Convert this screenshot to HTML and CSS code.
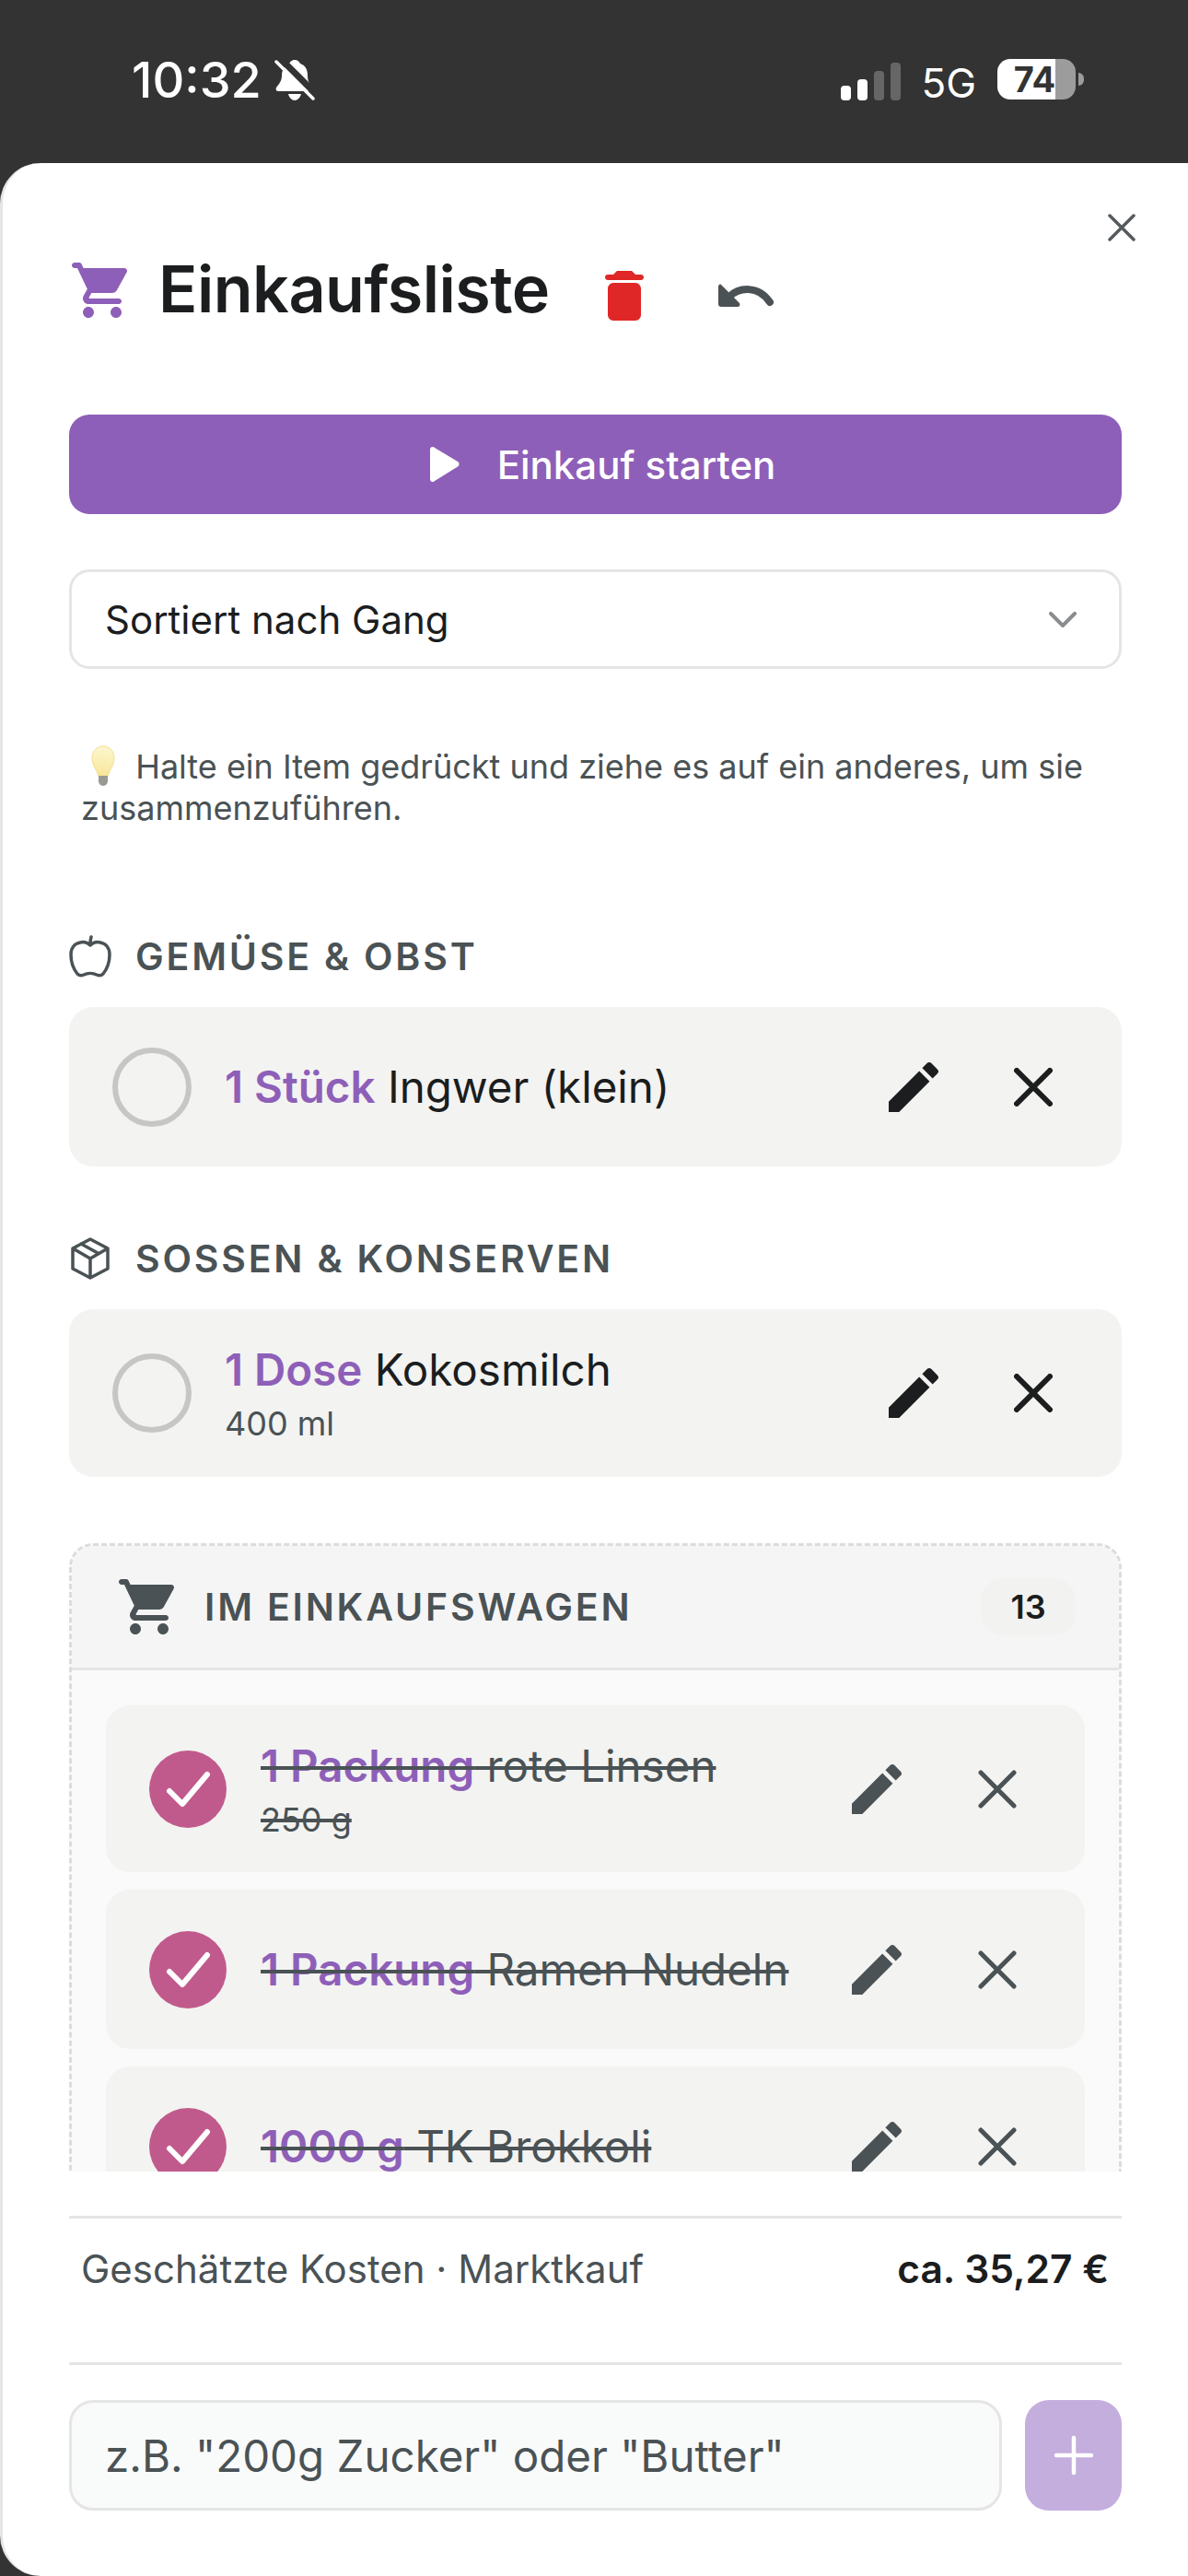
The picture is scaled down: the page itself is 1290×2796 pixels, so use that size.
FILE: index.html
```html
<!DOCTYPE html>
<html>
    <head>
        <meta charset="utf-8">
        <title>Einkaufsliste</title>
        <link rel="stylesheet" href="styles.css">
    </head>

    <body>
        <header class="statusbar">
            <div class="status-left">
                <span class="clock">10:32</span>
                <svg class="bell" viewBox="0 0 44 46">
                    <path fill="#fff" d="M22 1c3 0 5 2 6 4 6 2 8 7 8 13 0 6 2 9 5 13 1 2 0 4-2 4H4c-2 0-3-2-2-4 3-4 6-7 6-13 0-6 3-11 8-13 1-2 3-4 6-4zM15 38h14c-1 4-4 7-7 7s-6-3-7-7z"/>
                    <path stroke="#333" stroke-width="7" d="M6 -1 46 39"/>
                    <path stroke="#fff" stroke-width="3.5" stroke-linecap="round" d="M2 3 42 43"/>
                </svg>
            </div>
            <div class="status-right">
                <div class="signal">
                    <i class="bar bar1"></i>
                    <i class="bar bar2"></i>
                    <i class="bar bar3"></i>
                    <i class="bar bar4"></i>
                </div>
                <span class="net">5G</span>
                <div class="battery"><span class="battery-level">74</span></div>
                <i class="battery-tip"></i>
            </div>
        </header>

        <main class="sheet">
            <svg class="close" viewBox="0 0 30 30">
                <path d="M2 2 28 28M28 2 2 28"/>
            </svg>

            <div class="title-row">
                <svg class="title-cart" viewBox="0 0 24 24">
                    <path d="M7 18c-1.1 0-1.99.9-1.99 2S5.9 22 7 22s2-.9 2-2-.9-2-2-2zM2 2c-.55 0-1 .45-1 1s.45 1 1 1h1l3.6 7.59-1.35 2.45c-.16.28-.25.61-.25.96 0 1.1.9 2 2 2h11c.55 0 1-.45 1-1s-.45-1-1-1H7.42c-.14 0-.25-.11-.25-.25l.03-.12.9-1.63h7.45c.75 0 1.41-.41 1.75-1.03l3.58-6.49c.08-.14.12-.31.12-.48 0-.55-.45-1-1-1H5.21l-.67-1.43C4.38 2.22 4.03 2 3.64 2H2zm15 16c-1.1 0-1.99.9-1.99 2s.89 2 1.99 2 2-.9 2-2-.9-2-2-2z"/>
                </svg>
                <h1>Einkaufsliste</h1>
                <svg class="trash" viewBox="0 0 42 54">
                    <path d="M13 0h16l4 4h6c1.500 0 3 1 3 3s-1.500 3-3 3H3c-1.500 0-3-1-3-3s1.500-3 3-3h6zM9 13h24c3 0 6 3 6 6v29c0 3-3 6-6 6H9c-3 0-6-3-6-6V19c0-3 3-6 6-6z"/>
                </svg>
                <svg class="undo" viewBox="0 0 60 26">
                    <path class="undo-head" d="M3 1 23 21c1 2 0 4-2 4H3c-2 0-3-1-3-3V3c0-2 2-3 3-2z"/>
                    <path class="undo-line" d="M12 14C22 4 43 1 56 20"/>
                </svg>
            </div>

            <button class="start-btn" type="button">
                <svg class="play" viewBox="0 0 32 38"><path d="M0 3C0 0 3-1 5 1l25 15c2 1.500 2 4 0 5.500L5 37c-2 2-5 1-5-2z"/></svg>
                Einkauf starten
            </button>

            <div class="sort-select">
                <span>Sortiert nach Gang</span>
                <svg class="chevron" viewBox="0 0 30 18"><path d="M2 2 15 15 28 2"/></svg>
            </div>

            <p class="tip">
                <svg class="bulb" viewBox="0 0 30 44">
                    <defs>
                        <linearGradient id="bulbFill" x1="0" y1="0" x2="0" y2="1">
                            <stop offset="0" stop-color="#fdf7d0"/>
                            <stop offset="1" stop-color="#f8e69a"/>
                        </linearGradient>
                    </defs>
                    <path fill="url(#bulbFill)" stroke="#f3e08c" stroke-width="1" d="M15 1c7 0 12 5 12 13 0 7-4 11-7 19h-10C7 25 3 21 3 14 3 6 8 1 15 1z"/>
                    <path fill="#9a9a94" d="M10 33h10v6c0 2-2 5-5 5s-5-3-5-5z"/>
                </svg>
                Halte ein Item gedrückt und ziehe es auf ein anderes, um sie zusammenzuführen.
            </p>

            <h2 class="section-head head-first">
                <svg class="section-icon" viewBox="0 0 46 46">
                    <path d="M23 11c-3-3-7-4-11-3C6 9 2 14 2 21c0 8 3 16 7 21 2 2 5 2 7 1 4-2 10-2 14 0 2 1 5 1 7-1 4-5 7-13 7-21 0-7-4-12-10-13-4-1-8 0-11 3zM23 11c0-3 0-6 1-9"/>
                </svg>
                GEMÜSE &amp; OBST
            </h2>
            <div class="item item-single">
                <i class="check-open"></i>
                <div class="item-text"><b>1 Stück</b> Ingwer (klein)</div>
                <svg class="edit" viewBox="0 0 24 24"><path d="M3 17.250V21h3.750L17.810 9.940l-3.750-3.750L3 17.250zM20.710 7.040c.39-.39.39-1.020 0-1.410l-2.340-2.340c-.39-.39-1.020-.39-1.410 0l-1.830 1.830 3.750 3.750 1.830-1.830z"/></svg>
                <svg class="remove" viewBox="0 0 42 42"><path d="M3 3 39 39M39 3 3 39"/></svg>
            </div>

            <h2 class="section-head head-second">
                <svg class="section-icon" viewBox="0 0 46 46">
                    <path d="M23 2 42 12V34L23 44 4 34V12zM4 12 23 23 42 12M23 23V44M13 7 32 17.500"/>
                </svg>
                SOSSEN &amp; KONSERVEN
            </h2>
            <div class="item item-double">
                <i class="check-open"></i>
                <div class="item-text">
                    <div><b>1 Dose</b> Kokosmilch</div>
                    <div class="item-sub">400 ml</div>
                </div>
                <svg class="edit" viewBox="0 0 24 24"><path d="M3 17.250V21h3.750L17.810 9.940l-3.750-3.750L3 17.250zM20.710 7.040c.39-.39.39-1.020 0-1.410l-2.340-2.340c-.39-.39-1.020-.39-1.410 0l-1.830 1.830 3.750 3.750 1.830-1.830z"/></svg>
                <svg class="remove" viewBox="0 0 42 42"><path d="M3 3 39 39M39 3 3 39"/></svg>
            </div>

            <section class="cart-box">
                <div class="cart-head">
                    <svg class="cart-icon" viewBox="0 0 24 24">
                        <path d="M7 18c-1.1 0-1.99.9-1.99 2S5.9 22 7 22s2-.9 2-2-.9-2-2-2zM2 2c-.55 0-1 .45-1 1s.45 1 1 1h1l3.6 7.59-1.35 2.45c-.16.28-.25.61-.25.96 0 1.1.9 2 2 2h11c.55 0 1-.45 1-1s-.45-1-1-1H7.42c-.14 0-.25-.11-.25-.25l.03-.12.9-1.63h7.45c.75 0 1.41-.41 1.75-1.03l3.58-6.49c.08-.14.12-.31.12-.48 0-.55-.45-1-1-1H5.21l-.67-1.43C4.38 2.22 4.03 2 3.64 2H2zm15 16c-1.1 0-1.99.9-1.99 2s.89 2 1.99 2 2-.9 2-2-.9-2-2-2z"/>
                    </svg>
                    <span class="cart-title">IM EINKAUFSWAGEN</span>
                    <span class="cart-count">13</span>
                </div>
                <div class="cart-list">
                    <div class="item done item-cart-double">
                        <svg class="check-done" viewBox="0 0 84 84"><circle cx="42" cy="42" r="42"/><path d="M22 44 36 58 63 26"/></svg>
                        <div class="item-text">
                            <div class="strike"><b>1 Packung</b> rote Linsen</div>
                            <div class="item-sub strike">250 g</div>
                        </div>
                        <svg class="edit" viewBox="0 0 24 24"><path d="M3 17.250V21h3.750L17.810 9.940l-3.750-3.750L3 17.250zM20.710 7.040c.39-.39.39-1.020 0-1.410l-2.340-2.340c-.39-.39-1.020-.39-1.410 0l-1.830 1.830 3.750 3.750 1.830-1.830z"/></svg>
                        <svg class="remove" viewBox="0 0 42 42"><path d="M3 3 39 39M39 3 3 39"/></svg>
                    </div>
                    <div class="item done item-cart-single">
                        <svg class="check-done" viewBox="0 0 84 84"><circle cx="42" cy="42" r="42"/><path d="M22 44 36 58 63 26"/></svg>
                        <div class="item-text">
                            <div class="strike"><b>1 Packung</b> Ramen Nudeln</div>
                        </div>
                        <svg class="edit" viewBox="0 0 24 24"><path d="M3 17.250V21h3.750L17.810 9.940l-3.750-3.750L3 17.250zM20.710 7.040c.39-.39.39-1.020 0-1.410l-2.340-2.340c-.39-.39-1.020-.39-1.410 0l-1.830 1.830 3.750 3.750 1.830-1.830z"/></svg>
                        <svg class="remove" viewBox="0 0 42 42"><path d="M3 3 39 39M39 3 3 39"/></svg>
                    </div>
                    <div class="item done item-cart-single">
                        <svg class="check-done" viewBox="0 0 84 84"><circle cx="42" cy="42" r="42"/><path d="M22 44 36 58 63 26"/></svg>
                        <div class="item-text">
                            <div class="strike"><b>1000 g</b> TK Brokkoli</div>
                        </div>
                        <svg class="edit" viewBox="0 0 24 24"><path d="M3 17.250V21h3.750L17.810 9.940l-3.750-3.750L3 17.250zM20.710 7.040c.39-.39.39-1.020 0-1.410l-2.340-2.340c-.39-.39-1.020-.39-1.410 0l-1.830 1.830 3.750 3.750 1.830-1.830z"/></svg>
                        <svg class="remove" viewBox="0 0 42 42"><path d="M3 3 39 39M39 3 3 39"/></svg>
                    </div>
                </div>
            </section>

            <div class="costs">
                <span>Geschätzte Kosten · Marktkauf</span>
                <strong>ca. 35,27 €</strong>
            </div>

            <div class="add-row">
                <div class="add-input">z.B. "200g Zucker" oder "Butter"</div>
                <div class="add-btn">
                    <svg class="plus" viewBox="0 0 44 44"><path d="M22 3V41M3 22H41"/></svg>
                </div>
            </div>
        </main>
    </body>
</html>
```

FILE: styles.css
```css
* {
    box-sizing: border-box;
}

body {
    margin: 0;
    width: 1290px;
    height: 2796px;
    overflow: hidden;
    display: flex;
    flex-direction: column;
    background-color: #333333;
    font-family: Inter, "Noto Sans", sans-serif;
    color: #1b1d1e;
}

/* status bar */
.statusbar {
    height: 177px;
    flex-shrink: 0;
    display: flex;
    justify-content: space-between;
    padding: 64px 113px 0 143px;
    color: #fff;
}

.status-left {
    display: flex;
    align-items: flex-start;
    height: 46px;
}

.clock {
    font-size: 54px;
    font-weight: 500;
    line-height: 46px;
}

.bell {
    width: 44px;
    height: 46px;
    margin-left: 14px;
}

.status-right {
    display: flex;
    align-items: flex-start;
}

.signal {
    display: flex;
    align-items: flex-end;
    gap: 7px;
    height: 43px;
    margin-top: 2px;
}

.bar {
    width: 11px;
    border-radius: 4px;
    background-color: #fff;
}

.bar1 {
    height: 16px;
}

.bar2 {
    height: 23px;
}

.bar3 {
    height: 32px;
    background-color: #666;
}

.bar4 {
    height: 41px;
    background-color: #666;
}

.net {
    font-size: 44px;
    font-weight: 400;
    line-height: 44px;
    margin: 4px 0 0 22px;
}

.battery {
    width: 85px;
    height: 44px;
    margin-left: 23px;
    border-radius: 14px;
    overflow: hidden;
    background: linear-gradient(to right, #fff 74%, #9c9c9c 74%);
    color: #333;
    text-align: center;
}

.battery-level {
    display: block;
    font-size: 38px;
    font-weight: 700;
    line-height: 44px;
    margin-right: 4px;
}

.battery-tip {
    width: 6px;
    height: 14px;
    margin: 15px 0 0 3px;
    border-radius: 0 7px 7px 0;
    background-color: #9c9c9c;
}

/* sheet */
.sheet {
    position: relative;
    flex: 1;
    display: flex;
    flex-direction: column;
    padding: 0 72px;
    background-color: #fff;
    border-left: 3px solid #e6e6e3;
    border-radius: 44px 0 0 44px;
}

.close {
    position: absolute;
    top: 55px;
    right: 57px;
    width: 30px;
    height: 30px;
    fill: none;
    stroke: #555a5c;
    stroke-width: 3.500;
    stroke-linecap: round;
}

.title-row {
    display: flex;
    align-items: center;
    height: 72px;
    margin-top: 102px;
}

.title-cart {
    width: 72px;
    height: 72px;
    fill: #8e5fb8;
}

h1 {
    margin: -2px 0 0 25px;
    font-size: 70px;
    font-weight: 600;
    line-height: 72px;
    letter-spacing: -0.5px;
    color: #1b1d1e;
}

.trash {
    width: 42px;
    height: 54px;
    margin: 12px 0 0 60px;
    fill: #e02727;
}

.undo {
    width: 60px;
    height: 26px;
    margin: 12px 0 0 81px;
}

.undo-head {
    fill: #4a5255;
}

.undo-line {
    fill: none;
    stroke: #4a5255;
    stroke-width: 8;
    stroke-linecap: round;
}

.start-btn {
    display: flex;
    align-items: center;
    justify-content: center;
    gap: 41px;
    height: 108px;
    margin-top: 99px;
    padding-left: 22px;
    border: none;
    border-radius: 22px;
    background-color: #8e5fb8;
    color: #fff;
    font-family: inherit;
    font-size: 42px;
    font-weight: 500;
}

.play {
    width: 32px;
    height: 38px;
    fill: #fff;
}

.sort-select {
    display: flex;
    align-items: center;
    justify-content: space-between;
    height: 108px;
    margin-top: 60px;
    padding: 0 46px 0 36px;
    border: 3px solid #e5e5e4;
    border-radius: 22px;
    font-size: 42px;
}

.chevron {
    width: 30px;
    height: 18px;
    margin-top: 2px;
    fill: none;
    stroke: #8a8c8d;
    stroke-width: 4;
    stroke-linecap: round;
    stroke-linejoin: round;
}

.tip {
    margin: 83px 0 0;
    padding: 0 30px 0 13px;
    font-size: 36px;
    line-height: 45px;
    color: #4a5255;
}

.bulb {
    width: 30px;
    height: 44px;
    margin: 0 10px 0 9px;
    vertical-align: -8px;
}

.section-head {
    display: flex;
    align-items: center;
    gap: 26px;
    height: 46px;
    margin: 0;
    font-size: 41px;
    font-weight: 600;
    letter-spacing: 2.800px;
    color: #4a5255;
}

.head-first {
    margin-top: 115px;
}

.head-second {
    margin-top: 77px;
}

.section-icon {
    width: 46px;
    height: 46px;
    fill: none;
    stroke: #4a5255;
    stroke-width: 3.500;
    stroke-linejoin: round;
    stroke-linecap: round;
}

/* list rows */
.item {
    display: flex;
    align-items: center;
    flex-shrink: 0;
    border-radius: 26px;
    background-color: #f3f3f1;
}

.item-single {
    height: 173px;
    margin-top: 32px;
    padding: 0 75px 0 47px;
}

.item-double {
    height: 182px;
    margin-top: 32px;
    padding: 0 75px 0 47px;
}

.check-open {
    width: 86px;
    height: 86px;
    flex-shrink: 0;
    border: 6px solid #c6c7c5;
    border-radius: 50%;
}

.item-text {
    flex: 1;
    margin-left: 36px;
    font-size: 47.500px;
    line-height: 62px;
    color: #1b1d1e;
}

.item-text b {
    font-weight: 600;
    color: #8e5fb8;
}

.item-sub {
    margin-top: 4px;
    font-size: 36px;
    line-height: 46px;
    color: #4a5255;
}

.edit {
    width: 72px;
    height: 72px;
    flex-shrink: 0;
    fill: #1b1d1e;
}

.remove {
    width: 42px;
    height: 42px;
    flex-shrink: 0;
    margin-left: 73px;
    fill: none;
    stroke: #1b1d1e;
    stroke-width: 6;
    stroke-linecap: round;
}

/* cart */
.cart-box {
    height: 682px;
    flex-shrink: 0;
    margin-top: 72px;
    overflow: hidden;
    border: 3px dashed #dcdcda;
    border-bottom: none;
    border-radius: 26px 26px 0 0;
    background-color: #fafafa;
}

.cart-head {
    display: flex;
    align-items: center;
    height: 135px;
    padding: 0 47px 0 48px;
    background-color: #f5f5f5;
    border-bottom: 3px solid #e5e5e4;
}

.cart-icon {
    width: 72px;
    height: 72px;
    fill: #4a5255;
}

.cart-title {
    flex: 1;
    margin-left: 24px;
    font-size: 41px;
    font-weight: 600;
    letter-spacing: 2.800px;
    color: #4a5255;
}

.cart-count {
    width: 103px;
    height: 62px;
    border-radius: 24px;
    background-color: #f2f2f0;
    font-size: 36px;
    font-weight: 600;
    line-height: 62px;
    text-align: center;
}

.cart-list {
    display: flex;
    flex-direction: column;
    gap: 19px;
    padding: 38px 37px;
}

.done .item-text {
    margin-left: 37px;
    color: #4a5255;
}

.done {
    padding: 0 74px 0 47px;
}

.item-cart-double {
    height: 181px;
}

.item-cart-single {
    height: 173px;
}

.check-done {
    width: 84px;
    height: 84px;
    flex-shrink: 0;
    fill: #c15a8c;
    stroke: none;
}

.check-done path {
    fill: none;
    stroke: #fff;
    stroke-width: 6;
    stroke-linecap: round;
    stroke-linejoin: round;
}

.strike {
    text-decoration: line-through;
    text-decoration-color: #4a5255;
    text-decoration-thickness: 4px;
}

.done .edit {
    fill: #4a5255;
}

.done .remove {
    stroke: #4a5255;
    stroke-width: 5;
    margin-left: 74px;
}

/* bottom */
.costs {
    display: flex;
    justify-content: space-between;
    height: 162px;
    margin-top: 48px;
    padding: 30px 14px 0 13px;
    border-top: 3px solid #e5e5e4;
    border-bottom: 3px solid #e5e5e4;
    font-size: 42px;
    line-height: 50px;
    color: #4a5255;
}

.costs strong {
    font-size: 42.500px;
    font-weight: 600;
    color: #1b1d1e;
}

.add-row {
    display: flex;
    gap: 25px;
    height: 120px;
    margin-top: 38px;
}

.add-input {
    flex: 1;
    display: flex;
    align-items: center;
    padding-left: 36px;
    border: 3px solid #e5e5e4;
    border-radius: 26px;
    background-color: #f9fafa;
    font-size: 47.500px;
    color: #4a5255;
}

.add-btn {
    display: flex;
    align-items: center;
    justify-content: center;
    width: 105px;
    border-radius: 26px;
    background-color: #c4aede;
}

.plus {
    width: 44px;
    height: 44px;
    fill: none;
    stroke: #fff;
    stroke-width: 4.500;
    stroke-linecap: round;
}
```
